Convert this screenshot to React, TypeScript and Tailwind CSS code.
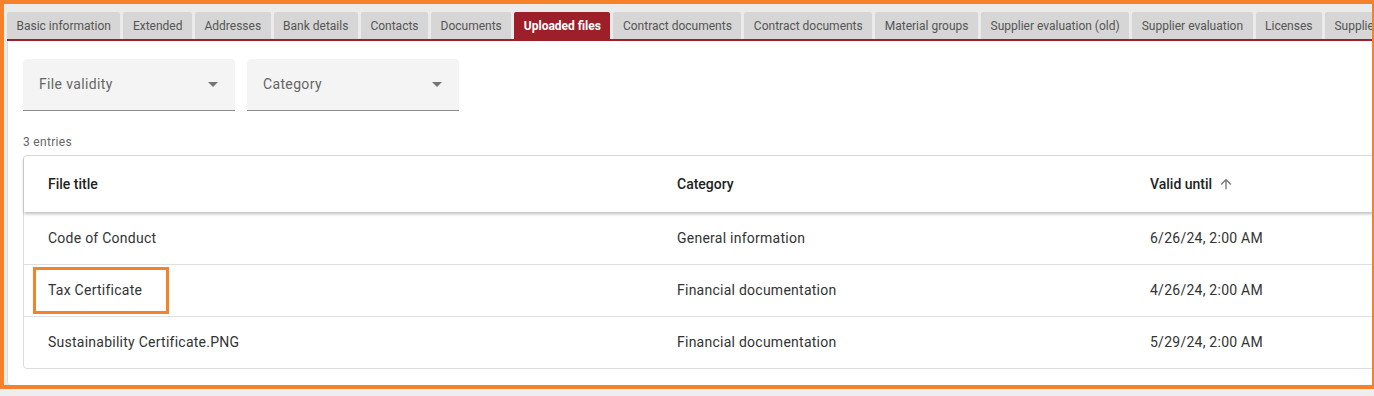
const tabs = [
  'Basic information',
  'Extended',
  'Addresses',
  'Bank details',
  'Contacts',
  'Documents',
  'Uploaded files',
  'Contract documents',
  'Contract documents',
  'Material groups',
  'Supplier evaluation (old)',
  'Supplier evaluation',
  'Licenses',
  'Supplier documents',
];

const rows = [
  { title: 'Code of Conduct', category: 'General information', valid: '6/26/24, 2:00 AM' },
  { title: 'Tax Certificate', category: 'Financial documentation', valid: '4/26/24, 2:00 AM', marked: true },
  { title: 'Sustainability Certificate.PNG', category: 'Financial documentation', valid: '5/29/24, 2:00 AM' },
];

function SelectField({ label }: { label: string }) {
  return (
    <div className="w-[212px] h-[52px] bg-[#f4f4f4] rounded-t border-b border-[#8c8c8c] flex items-center justify-between pl-4 pr-4">
      <span className="text-[14px] tracking-[0.35px] text-[#666]">{label}</span>
      <svg width="10" height="5" viewBox="0 0 10 5" className="mr-[1px]">
        <path d="M0 0 L10 0 L5 5 Z" fill="#757575" />
      </svg>
    </div>
  );
}

export default function App() {
  return (
    <div className="w-[1374px] h-[396px] bg-[#eeeeee] overflow-hidden font-['Roboto',sans-serif]">
      <div className="h-[389px] border-t-4 border-l-4 border-b-4 border-r-2 border-[#f5822a] bg-[#ebebeb] pt-2 pl-[3px] overflow-hidden">
        <div className="flex gap-[3px] h-[27px] whitespace-nowrap">
          {tabs.map((t, i) => (
            <div
              key={i}
              className={
                i === 6
                  ? 'shrink-0 px-[9.5px] flex items-center rounded-t-[2px] bg-[#9c1f29] text-white font-bold text-[12px]'
                  : 'shrink-0 px-[9.5px] flex items-center rounded-t-[2px] bg-[#d6d6d6] text-[#555] text-[12px]'
              }
            >
              {t}
            </div>
          ))}
        </div>
        <div className="h-[2px] bg-[#9c1f29]" />
        <div className="h-[344px] bg-white border-l border-[#dcdcdc] rounded-bl pt-[17px] pl-[15px]">
          <div className="flex gap-3 pt-px">
            <SelectField label="File validity" />
            <SelectField label="Category" />
          </div>
          <div className="mt-[23px] text-[12px] leading-4 tracking-[0.3px] text-[#666]">3 entries</div>
          <div className="mt-[5px] w-[1400px] border border-[#dcdcdc] rounded text-[14px]">
            <div className="grid grid-cols-[629px_473px_1fr] h-[56px] items-center font-medium text-[#222] shadow-[0_2px_3px_rgba(0,0,0,0.25)] relative">
              <div className="pl-6">File title</div>
              <div className="pl-6">Category</div>
              <div className="pl-6 flex items-center gap-[6px]">
                Valid until
                <svg width="16" height="16" viewBox="0 0 24 24">
                  <path d="M4 12l1.41 1.41L11 7.83V20h2V7.83l5.58 5.59L20 12l-8-8-8 8z" fill="#757575" />
                </svg>
              </div>
            </div>
            {rows.map((r, i) => (
              <div
                key={i}
                className={
                  i === 0
                    ? 'grid grid-cols-[629px_473px_1fr] h-[52px] items-center text-[#333] tracking-[0.25px]'
                    : 'grid grid-cols-[629px_473px_1fr] h-[52px] items-center text-[#333] tracking-[0.25px] border-t border-[#e0e0e0]'
                }
              >
                <div className="pl-[9px]">
                  {r.marked ? (
                    <span className="inline-flex items-center h-[47px] w-[136px] pl-[12px] border-[3px] border-[#f5822a]">
                      {r.title}
                    </span>
                  ) : (
                    <span className="pl-[15px]">{r.title}</span>
                  )}
                </div>
                <div className="pl-6">{r.category}</div>
                <div className="pl-6">{r.valid}</div>
              </div>
            ))}
          </div>
        </div>
      </div>
    </div>
  );
}
